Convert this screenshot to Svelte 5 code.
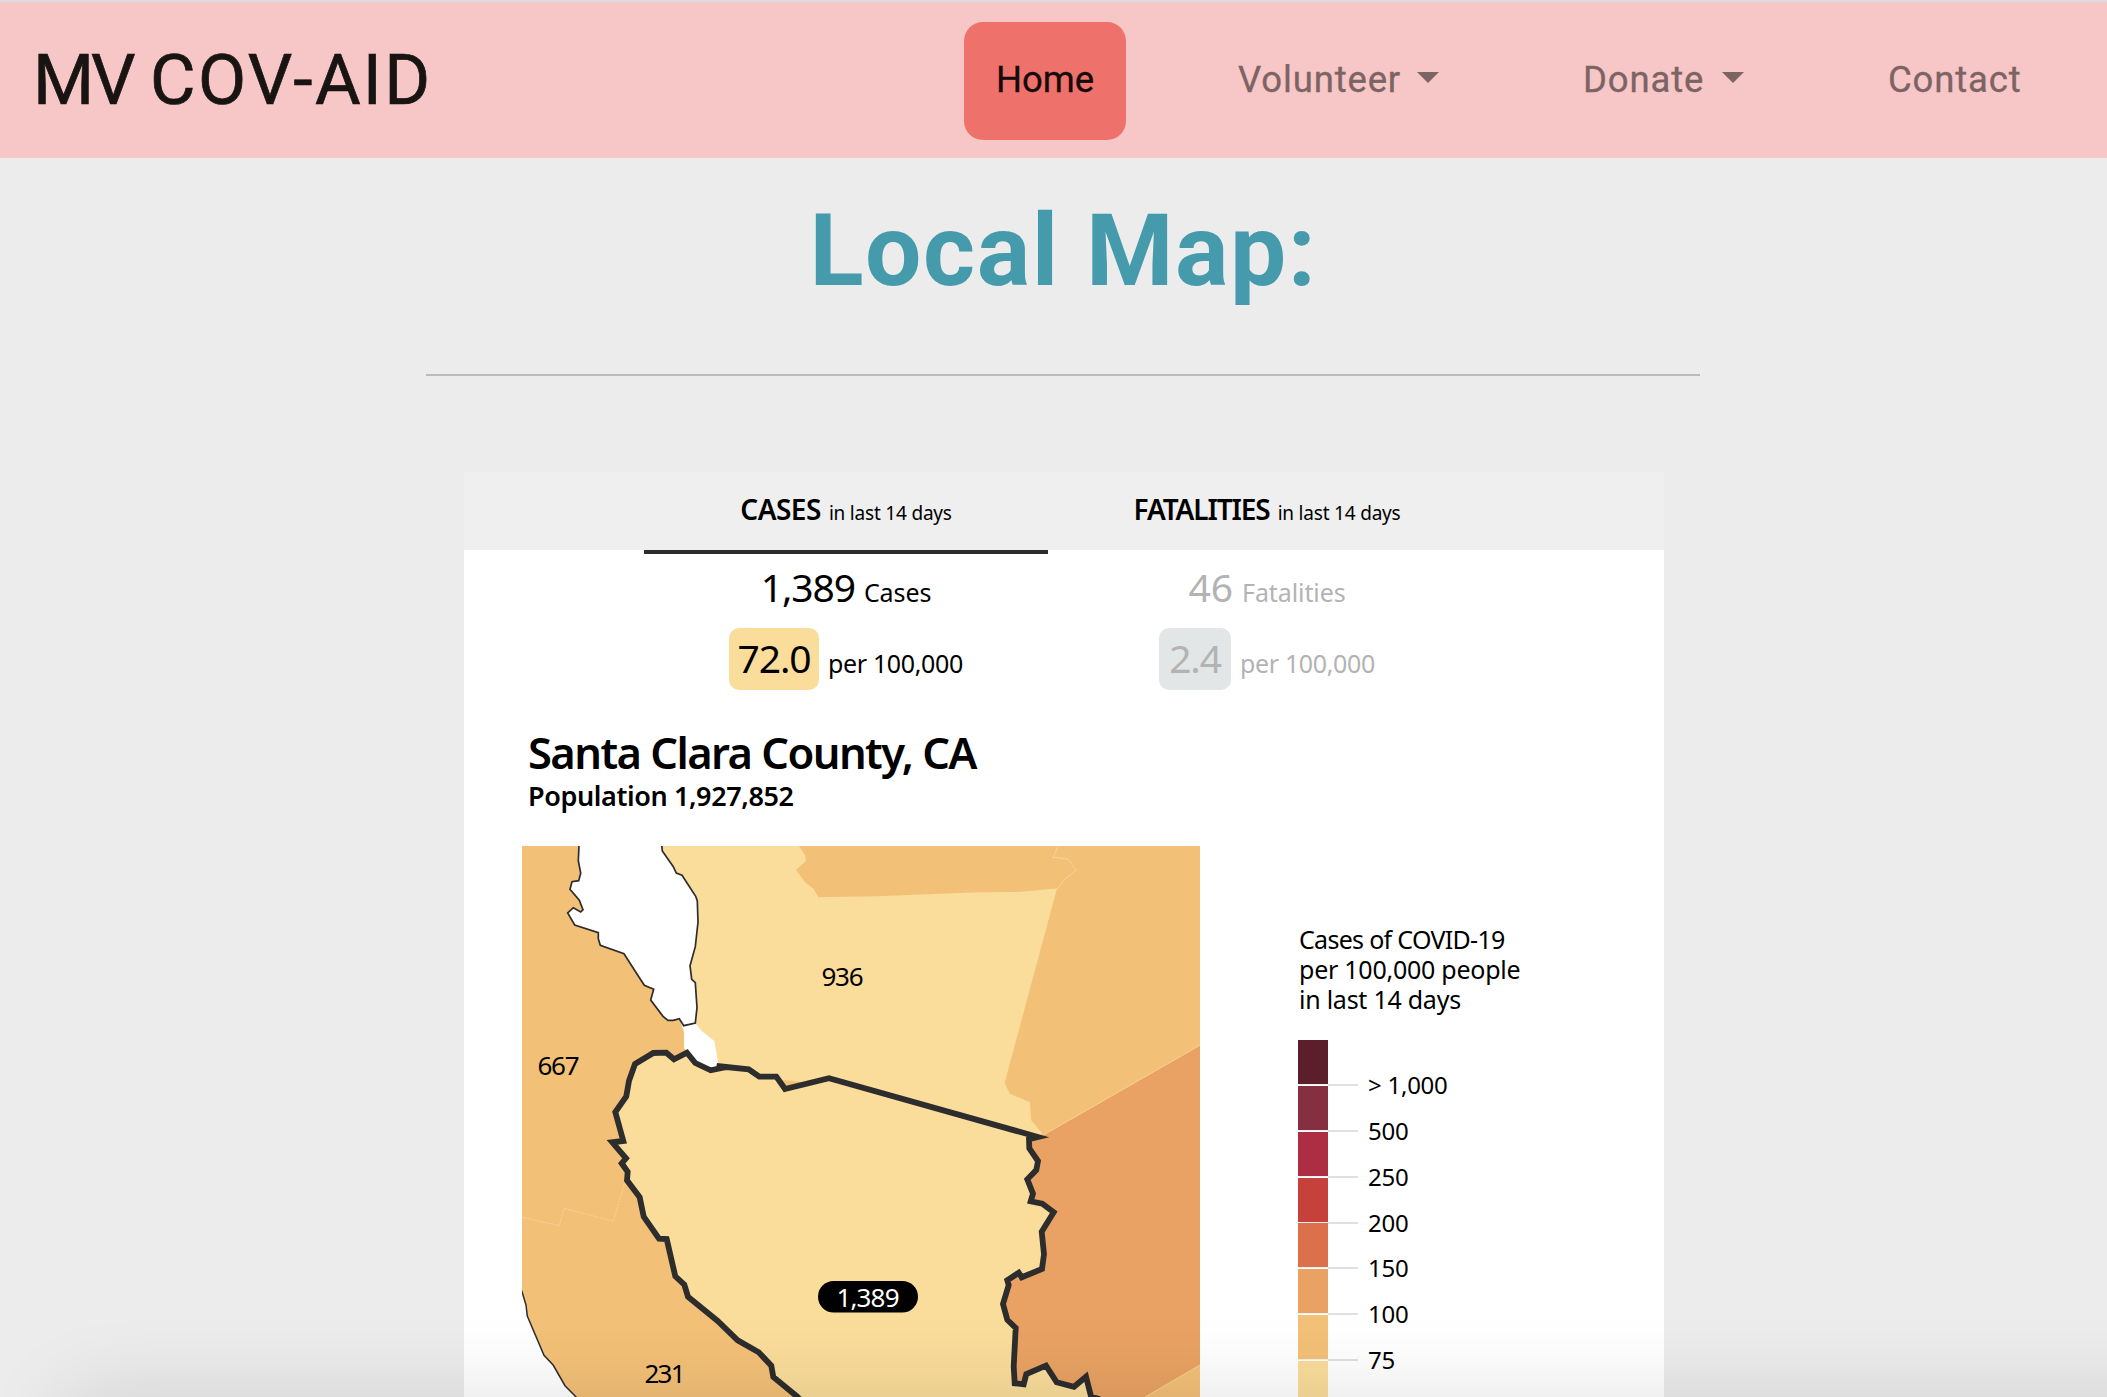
<script>
  const nav = [
    { label: 'Home', active: true, cls: 'home' },
    { label: 'Volunteer', menu: true, cls: 'volunteer' },
    { label: 'Donate', menu: true, cls: 'donate' },
    { label: 'Contact', cls: 'contact' }
  ];

  const legend = [
    { color: '#5a1f2a', label: '> 1,000' },
    { color: '#862f41', label: '500' },
    { color: '#ad2d43', label: '250' },
    { color: '#c6413b', label: '200' },
    { color: '#dc704b', label: '150' },
    { color: '#e9a263', label: '100' },
    { color: '#f3c077', label: '75' },
    { color: '#fadd9b', label: '50' }
  ];

  const county =
    '687,1052.7 695.3,1063 710.7,1070.3 723.3,1067.7 716.7,1066 748.7,1069.3 759.3,1076.7 776.3,1076.7 785,1089 829,1078.3 1038,1137 1029,1139.3 1029.3,1148.3 1038,1161 1036.3,1170 1027.3,1179.3 1033,1193.7 1030.7,1201.3 1042.3,1203.7 1053.7,1212.3 1041.7,1231.7 1044,1254.3 1042,1269 1021.7,1277.3 1018.7,1272.7 1007.3,1280.3 1008.7,1285 1003,1304 1007.3,1319.7 1015.7,1328 1013.7,1366.7 1014.7,1383.3 1023.7,1384.3 1026.3,1374 1046,1365.7 1056.7,1382.3 1074,1386.7 1086,1376.7 1091,1396.3 1110,1403 1110,1420 820,1420 797.3,1396.7 773.3,1377 771.3,1365.7 758.7,1352.3 737.7,1340.3 717.7,1321 688,1296.7 684.3,1284.7 675.3,1276.3 666.7,1239 659,1238.7 643.7,1216.7 639.7,1197.3 627,1180.3 627.7,1171.7 621.7,1163.3 626,1158.3 612.3,1142.3 623.3,1141 615.3,1112 626.3,1096.3 629,1080.7 635,1064 653.3,1053 666.3,1052.7 674,1059.3';

  const bay =
    '579,840 579,846 578.3,860.7 580.7,873.3 578.7,880.7 572,881.7 570,889.3 579.3,900.3 583,909.7 580.7,912 573.3,907.7 567.7,913 574.7,925 598.3,932.7 598.3,938.7 600.3,945.3 624,953.7 632,966.3 644.3,985.3 653.7,989.3 650.7,1000 663,1016.3 668,1020.3 673.3,1020.3 679.3,1018.7 683.7,1025.7 695.3,1023 697,1007.7 695.3,982.7 691.7,979.3 690,965.7 695.3,946.7 698,922.3 697.3,901 695.7,896.3 682,875.3 676.3,873 673.3,866.7 662.3,851 661.3,840';
</script>

<div class="page">
  <header class="navbar">
    <span class="brand"><span class="mv">MV</span> <span class="aid">COV-AID</span></span>
    <nav>
      {#each nav as item}
        <a class="link {item.cls}" class:active={item.active}>
          <span class="word">{item.label}</span>
          {#if item.menu}<i class="caret"></i>{/if}
        </a>
      {/each}
    </nav>
  </header>

  <h1>Local Map:</h1>
  <hr />

  <section class="card">
    <div class="tabs">
      <div class="tab selected"><b>CASES</b><span>in last 14 days</span></div>
      <div class="tab"><b class="tight">FATALITIES</b><span>in last 14 days</span></div>
    </div>

    <div class="stats">
      <div class="stat">
        <div class="total"><span class="num">1,389</span><span class="unit">Cases</span></div>
        <div class="rate"><span class="badge">72.0</span><span class="unit per">per 100,000</span></div>
      </div>
      <div class="stat muted">
        <div class="total"><span class="num">46</span><span class="unit">Fatalities</span></div>
        <div class="rate"><span class="badge">2.4</span><span class="unit per">per 100,000</span></div>
      </div>
    </div>

    <h2>Santa Clara County, CA</h2>
    <p class="population">Population 1,927,852</p>

    <div class="body">
      <svg class="map" viewBox="522 846 678 551" width="678" height="551">
        <rect x="522" y="846" width="678" height="551" fill="#f3c077" />
        <polygon
          fill="#fadd9b"
          points="655,840 795,840 799,846 805,855.3 806,861 796,869.7 805,882.3 813.7,889 818.3,897.3 876.7,896.3 980,892.3 1018.3,892 1057,888.5 1004.7,1082.7 1009.7,1093.7 1030,1102.3 1031,1120 1042,1133 1038,1140 829,1085 710,1072 684,1048 684,1020"
        />
        <polygon fill="#e9a263" points="1200,1045.3 1040,1137 1000,1140 990,1397 1145,1397 1200,1365" />
        <g fill="none" stroke="#f9d9a0" stroke-width=".8">
          <polyline points="1058,846 1053.3,857.3 1068,859 1076,870.3 1065,879 1057,889" />
          <polyline points="1200,1045.3 1040,1137" />
          <polyline points="1200,1365 1145,1397" />
          <polyline stroke-dasharray="2 1" points="522,1217.3 559.3,1225.7 564.3,1208.3 613.3,1221.3 624.3,1184" />
        </g>
        <polygon fill="#fff" points="679.3,1018.7 684,1032 684,1048.3 688,1052 697,1063 711,1070 718.7,1066 714.3,1041 701.7,1031 695.3,1023" />
        <polygon fill="#fff" stroke="#2d2d2d" stroke-width="1.7" points={bay} />
        <polygon
          fill="#fff"
          stroke="#2d2d2d"
          stroke-width="1.5"
          points="515,1275 522,1291.7 526,1305 527.3,1316 544,1355.3 553.3,1365.3 565,1385.7 580,1401 515,1401"
        />
        <polygon fill="#fadd9b" stroke="#2d2d2d" stroke-width="5.8" stroke-miterlimit="10" points={county} />
        <rect x="818" y="1281" width="100" height="31.5" rx="15.7" />
        <g class="counts">
          <text x="821.5" y="986" textLength="42">936</text>
          <text x="537.5" y="1075" textLength="42">667</text>
          <text x="644.5" y="1383" textLength="41">231</text>
          <text x="836.5" y="1307" textLength="63" fill="#fff">1,389</text>
        </g>
      </svg>

      <aside class="legend">
        <p class="l1">Cases of COVID-19</p>
        <p>per 100,000 people</p>
        <p>in last 14 days</p>
        <div class="scale">
          {#each legend as step}
            <div class="step">
              <i class="swatch" style:background-color={step.color}></i>
              <i class="tick"></i>
              <span>{step.label}</span>
            </div>
          {/each}
        </div>
      </aside>
    </div>
  </section>
  <div class="shade"></div>
</div>

<style>
  :global(body) {
    margin: 0;
    overflow: hidden;
  }
  .page {
    position: relative;
    box-sizing: border-box;
    width: 2107px;
    height: 1397px;
    overflow: hidden;
    background: #ececec;
    border-top: 2px solid #d9dae0;
    font-family: 'Noto Sans', sans-serif;
    color: #000;
  }
  .navbar {
    display: flex;
    justify-content: space-between;
    box-sizing: border-box;
    height: 156px;
    padding: 20px 47px 18px 33px;
    background: #f7c6c6;
    font-family: Roboto, sans-serif;
  }
  .brand {
    font-size: 70px;
    line-height: 116px;
    color: #181412;
    white-space: nowrap;
    -webkit-text-stroke: 0.7px #181412;
  }
  .mv {
    letter-spacing: -3px;
  }
  .aid {
    letter-spacing: 2.3px;
  }
  nav {
    display: flex;
    gap: 80px;
  }
  .link {
    display: flex;
    align-items: center;
    box-sizing: border-box;
    height: 118px;
    padding: 0 32px;
    border-radius: 19px;
    font-size: 36.5px;
    letter-spacing: 0.85px;
    color: #7c6364;
    white-space: nowrap;
    -webkit-text-stroke: 0.3px currentColor;
  }
  .word {
    line-height: 116px;
    height: 118px;
  }
  .home { width: 162px; }
  .volunteer { width: 265px; }
  .donate { width: 225px; }
  .contact { width: 204px; }
  .active {
    background: #ee716b;
    color: #150b0a;
    letter-spacing: 0;
  }
  .caret {
    margin: -7px 0 0 auto;
    border: 11px solid transparent;
    border-top: 11px solid #7c6364;
    border-bottom: 0;
  }
  h1 {
    margin: 0;
    padding: 25px 0 0 20px;
    text-align: center;
    font: 700 100px/136px Roboto, sans-serif;
    letter-spacing: 1.5px;
    color: #459bab;
  }
  hr {
    box-sizing: border-box;
    width: 1274px;
    height: 2px;
    margin: 55px 0 96px 426px;
    border: 0;
    background: #bbb;
  }
  .card {
    width: 1200px;
    height: 925px;
    margin-left: 464px;
    background: #fff;
  }
  .tabs {
    display: flex;
    height: 78px;
    padding-left: 180px;
    background: #efefef;
  }
  .tab {
    display: flex;
    justify-content: center;
    align-items: baseline;
    gap: 8px;
    box-sizing: border-box;
    width: 404px;
    height: 82px;
    padding-top: 18px;
    white-space: nowrap;
  }
  .tab + .tab {
    width: 438px;
  }
  .selected {
    border-bottom: 4px solid #2d2d2d;
  }
  .tab b {
    font-size: 28px;
    font-weight: 600;
    letter-spacing: -0.5px;
  }
  .tab .tight {
    letter-spacing: -1.1px;
  }
  .tab span {
    font-size: 19px;
    letter-spacing: -0.2px;
  }
  .stats {
    display: flex;
    padding-left: 180px;
  }
  .stat {
    width: 404px;
    padding-top: 7px;
  }
  .stat + .stat {
    width: 438px;
  }
  .muted {
    color: #b3b3b3;
  }
  .total,
  .rate {
    display: flex;
    justify-content: center;
    align-items: baseline;
    gap: 9px;
    height: 71px;
    line-height: 60px;
    white-space: nowrap;
  }
  .num,
  .badge {
    font-size: 39px;
    letter-spacing: -1.1px;
  }
  .muted .num {
    letter-spacing: 0;
  }
  .unit {
    font-size: 25px;
    letter-spacing: -0.1px;
  }
  .per {
    letter-spacing: -0.35px;
  }
  .badge {
    box-sizing: border-box;
    width: 90px;
    height: 62px;
    border-radius: 10px;
    text-align: center;
    background: #fadd9b;
  }
  .muted .badge {
    width: 72px;
    background: #e2e6e7;
  }
  h2 {
    margin: 25px 0 0 64px;
    font-size: 43.5px;
    font-weight: 600;
    letter-spacing: -1.55px;
    line-height: 56px;
    white-space: nowrap;
  }
  .population {
    width: max-content;
    height: 66px;
    margin: 0 0 0 64px;
    font-size: 27px;
    font-weight: 600;
    letter-spacing: -0.4px;
    line-height: 32px;
  }
  .body {
    display: flex;
    padding-left: 58px;
  }
  .map {
    display: block;
    flex: none;
  }
  .counts {
    font-size: 26px;
  }
  .legend {
    height: 551px;
    box-sizing: border-box;
    padding: 78px 0 0 98px;
    font-size: 25px;
    line-height: 30px;
    letter-spacing: -0.25px;
  }
  .legend p {
    width: max-content;
    margin: 0 0 0 1px;
  }
  .legend .l1 {
    letter-spacing: -0.7px;
  }
  .scale {
    padding-top: 26px;
  }
  .step {
    display: flex;
    height: 45.85px;
    font-size: 24px;
  }
  .swatch {
    width: 30px;
    height: 44px;
    border-bottom: 1.85px solid #eee;
  }
  .tick {
    width: 30px;
    height: 44px;
    border-bottom: 2px solid #e0e0e0;
  }
  .step span {
    padding: 30px 0 0 10px;
    white-space: nowrap;
  }
  .shade {
    position: absolute;
    left: 65px;
    right: -200px;
    top: 1395px;
    height: 300px;
    box-shadow: 0 0 80px rgba(0, 0, 0, 0.12);
  }
</style>
